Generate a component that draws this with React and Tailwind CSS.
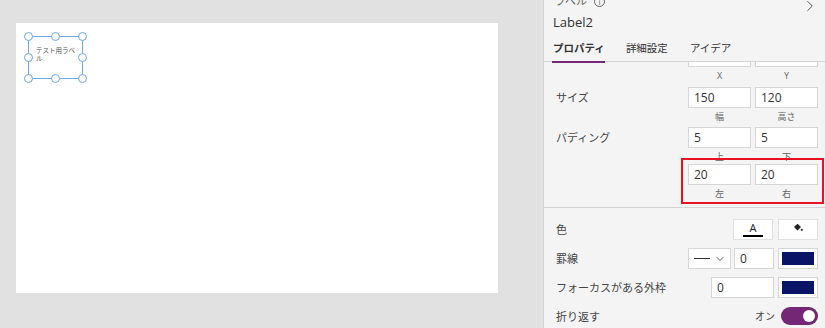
import { ChevronDown, ChevronRight } from "lucide-react";

const jp = { fontFamily: '"Open Sans", "Noto Sans CJK JP", sans-serif' };

const Field = ({ value, w = "w-[63px]" }) => (
  <div
    className={`${w} h-[21px] bg-white border border-[#d6d6d6] flex items-center px-[5px] text-[12px] text-[#333]`}
  >
    {value}
  </div>
);

const Pair = ({ a, b, la, lb }) => (
  <div className="flex flex-col items-end">
    <div className="flex gap-[4px]">
      <Field value={a} />
      <Field value={b} />
    </div>
    <div className="flex gap-[4px] text-[9px] text-[#666] leading-none mt-[4px]">
      <span className="w-[63px] text-center">{la}</span>
      <span className="w-[63px] text-center">{lb}</span>
    </div>
  </div>
);

const Handle = ({ className }) => (
  <div
    className={`absolute w-[9px] h-[9px] rounded-full bg-white border-[1.5px] border-[#6aa9e6] ${className}`}
  />
);

export default function App() {
  return (
    <div className="flex w-[825px] h-[328px] overflow-hidden bg-[#e1e1e1]" style={jp}>
      {/* canvas area */}
      <div className="w-[543px] pl-[16px] pt-[23px]">
        <div className="relative w-[482px] h-[270px] bg-white">
          <div className="absolute left-[12px] top-[13px] w-[55px] h-[43px] border border-[#6aa9e6]">
            <div className="pl-[7px] pt-[10px] pr-[5px] text-[6.5px] leading-[8px] text-[#555]">
              テスト用ラベル
            </div>
            <Handle className="-left-[5px] -top-[5px]" />
            <Handle className="left-[22px] -top-[5px]" />
            <Handle className="-right-[5px] -top-[5px]" />
            <Handle className="-left-[5px] top-[16px]" />
            <Handle className="-right-[5px] top-[16px]" />
            <Handle className="-left-[5px] -bottom-[5px]" />
            <Handle className="left-[22px] -bottom-[5px]" />
            <Handle className="-right-[5px] -bottom-[5px]" />
          </div>
        </div>
      </div>

      {/* properties panel */}
      <div className="w-[282px] bg-[#f4f4f4] border-l border-[#d4d4d4] flex flex-col">
        <div className="relative h-[62px] border-b border-[#d4d4d4] px-[9px]">
          <div className="flex items-center gap-[7px] -mt-[6px] pl-[1px] text-[11px] text-[#666] leading-[14px]">
            <span>ラベル</span>
            <span className="w-[11px] h-[11px] rounded-full border border-[#666] text-[8px] leading-[9px] text-center">i</span>
          </div>
          <ChevronRight className="absolute right-[6px] -top-[3px] w-[18px] h-[18px] text-[#555]" strokeWidth={1.3} />
          <div className="text-[13px] text-[#333] mt-[5px] leading-[18px]">Label2</div>
          <div className="flex text-[10.5px] text-[#333] mt-[9px]">
            <div className="flex flex-col">
              <span className="font-bold leading-[16px]">プロパティ</span>
              <span className="h-[2px] bg-[#742774] mt-[5px] -ml-[1px]" />
            </div>
            <span className="leading-[16px] ml-[21px]">詳細設定</span>
            <span className="leading-[16px] ml-[22px]">アイデア</span>
          </div>
        </div>

        <div className="relative flex flex-col h-[146px] overflow-hidden border-b border-[#d4d4d4] pl-[12px] pr-[7px]">
          {/* X / Y (scrolled) */}
          <div className="flex justify-end">
            <div className="flex flex-col items-end -mt-[16px]">
              <div className="flex gap-[4px]">
                <Field value="" />
                <Field value="" />
              </div>
              <div className="flex gap-[4px] text-[9px] text-[#666] leading-none mt-[4px]">
                <span className="w-[63px] text-center">X</span>
                <span className="w-[63px] text-center">Y</span>
              </div>
            </div>
          </div>

          <div className="flex justify-between mt-[7px]">
            <span className="text-[11px] text-[#444] pt-[3px]">サイズ</span>
            <Pair a="150" b="120" la="幅" lb="高さ" />
          </div>

          <div className="flex justify-between mt-[6px]">
            <span className="text-[11px] text-[#444] pt-[3px]">パディング</span>
            <Pair a="5" b="5" la="上" lb="下" />
          </div>

          <div className="flex justify-end mt-[3px]">
            <Pair a="20" b="20" la="左" lb="右" />
          </div>

          <div className="absolute left-[137px] top-[96px] w-[143px] h-[46px] border-2 border-[#e81123]" />
        </div>

        <div className="flex flex-col pl-[12px] pr-[7px] pt-[11px] gap-[8px] text-[11px] text-[#444]">
          <div className="flex items-center justify-between h-[21px]">
            <span className="pt-[2px]">色</span>
            <div className="flex gap-[5px]">
              <div className="w-[40px] h-[21px] bg-white border border-[#e0e0e0] flex flex-col items-center justify-center">
                <span className="text-[11px] leading-[11px] text-[#222]">A</span>
                <span className="w-[20px] h-[2px] bg-black mt-[2px]" />
              </div>
              <div className="w-[40px] h-[21px] bg-white border border-[#e0e0e0] flex flex-col items-center justify-center">
                <svg width="10" height="9" viewBox="0 0 10 9">
                  <path d="M1 4 L4.5 0.8 L8 4 L4.5 7.5 Z" fill="#222" />
                  <circle cx="8.8" cy="6.8" r="1.1" fill="#222" />
                </svg>
                <span className="w-[20px] h-[2px] bg-white mt-[2px]" />
              </div>
            </div>
          </div>

          <div className="flex items-center justify-between h-[21px]">
            <span className="pt-[2px]">罫線</span>
            <div className="flex gap-[3px]">
              <div className="w-[43px] h-[21px] bg-white border border-[#d6d6d6] flex items-center justify-center gap-[4px]">
                <span className="w-[16px] h-px bg-[#333]" />
                <ChevronDown className="w-[12px] h-[12px] text-[#333]" strokeWidth={1.5} />
              </div>
              <Field value="0" w="w-[40px]" />
              <div className="ml-[1px] w-[40px] h-[21px] bg-white border border-[#d6d6d6] p-[3px]">
                <div className="w-full h-full bg-[#0a1466]" />
              </div>
            </div>
          </div>

          <div className="flex items-center justify-between h-[21px]">
            <span className="pt-[2px]">フォーカスがある外枠</span>
            <div className="flex gap-[4px]">
              <Field value="0" />
              <div className="w-[40px] h-[21px] bg-white border border-[#d6d6d6] p-[3px]">
                <div className="w-full h-full bg-[#0a1466]" />
              </div>
            </div>
          </div>

          <div className="flex items-center justify-between h-[20px]">
            <span className="pt-[2px]">折り返す</span>
            <div className="flex items-center gap-[6px]">
              <span className="text-[10px] text-[#444]">オン</span>
              <div className="w-[37px] h-[18px] rounded-full bg-[#742774] flex items-center justify-end pr-[3px]">
                <span className="w-[12px] h-[12px] rounded-full bg-white" />
              </div>
            </div>
          </div>
        </div>
      </div>
    </div>
  );
}
